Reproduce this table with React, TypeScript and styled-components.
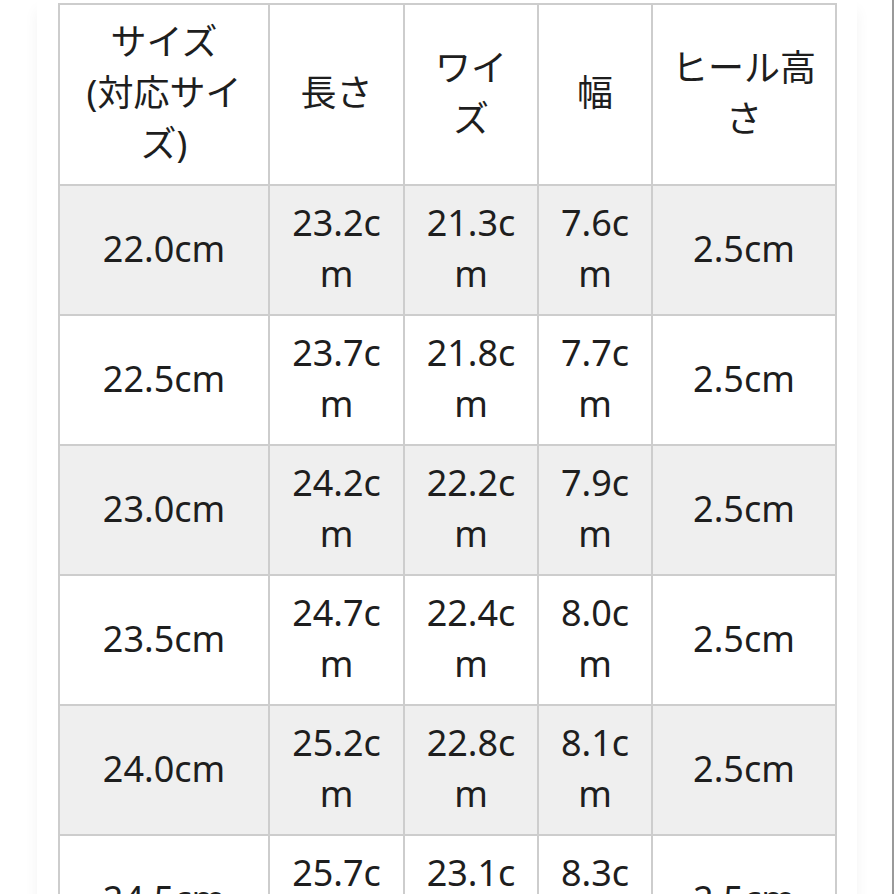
import React from "react";
import styled, { createGlobalStyle } from "styled-components";

const Global = createGlobalStyle`
  html, body { margin: 0; padding: 0; background: #ffffff; }
  body { font-family: "Noto Sans", "Noto Sans CJK JP", sans-serif; }
`;

const Page = styled.div`
  width: 894px;
  height: 894px;
  overflow: hidden;
  box-sizing: border-box;
  padding: 0 0 0 37px;
  border-right: 2px solid #9a9a9a;
  background: #ffffff;
`;

const Card = styled.div`
  width: 820px;
  min-height: 900px;
  box-sizing: border-box;
  padding: 3px 22px 0 21px;
  background: #ffffff;
  box-shadow: -10px 0 14px -10px rgba(0, 0, 0, 0.05), 10px 0 14px -10px rgba(0, 0, 0, 0.05);
`;

const Table = styled.table`
  width: 777px;
  table-layout: fixed;
  border-collapse: collapse;
  color: #1e1e1e;
  font-size: 36px;
  line-height: 51px;
`;

const Row = styled.tr<{ $shade?: boolean }>`
  background: ${(p) => (p.$shade ? "#efefef" : "#ffffff")};
`;

const Cell = styled.td`
  border: 2px solid #cdcdcd;
  padding: 11px 16px 15px;
  text-align: center;
  vertical-align: middle;
  word-break: break-all;
  font-weight: 400;
`;

const widths = [210, 135, 134, 114, 184];

const rows = [
  ["22.0cm", "23.2cm", "21.3cm", "7.6cm", "2.5cm"],
  ["22.5cm", "23.7cm", "21.8cm", "7.7cm", "2.5cm"],
  ["23.0cm", "24.2cm", "22.2cm", "7.9cm", "2.5cm"],
  ["23.5cm", "24.7cm", "22.4cm", "8.0cm", "2.5cm"],
  ["24.0cm", "25.2cm", "22.8cm", "8.1cm", "2.5cm"],
  ["24.5cm", "25.7cm", "23.1cm", "8.3cm", "2.5cm"],
];

export default function App() {
  return (
    <>
      <Global />
      <Page>
        <Card>
          <Table>
            <colgroup>
              {widths.map((w, i) => (
                <col key={i} style={{ width: w }} />
              ))}
            </colgroup>
            <tbody>
              <Row>
                <Cell as="th">
                  サイズ
                  <br />
                  (対応サイズ)
                </Cell>
                <Cell as="th">長さ</Cell>
                <Cell as="th">ワイズ</Cell>
                <Cell as="th">幅</Cell>
                <Cell as="th">ヒール高さ</Cell>
              </Row>
              {rows.map((r, i) => (
                <Row key={i} $shade={i % 2 === 0}>
                  {r.map((c, j) => (
                    <Cell key={j}>{c}</Cell>
                  ))}
                </Row>
              ))}
            </tbody>
          </Table>
        </Card>
      </Page>
    </>
  );
}
